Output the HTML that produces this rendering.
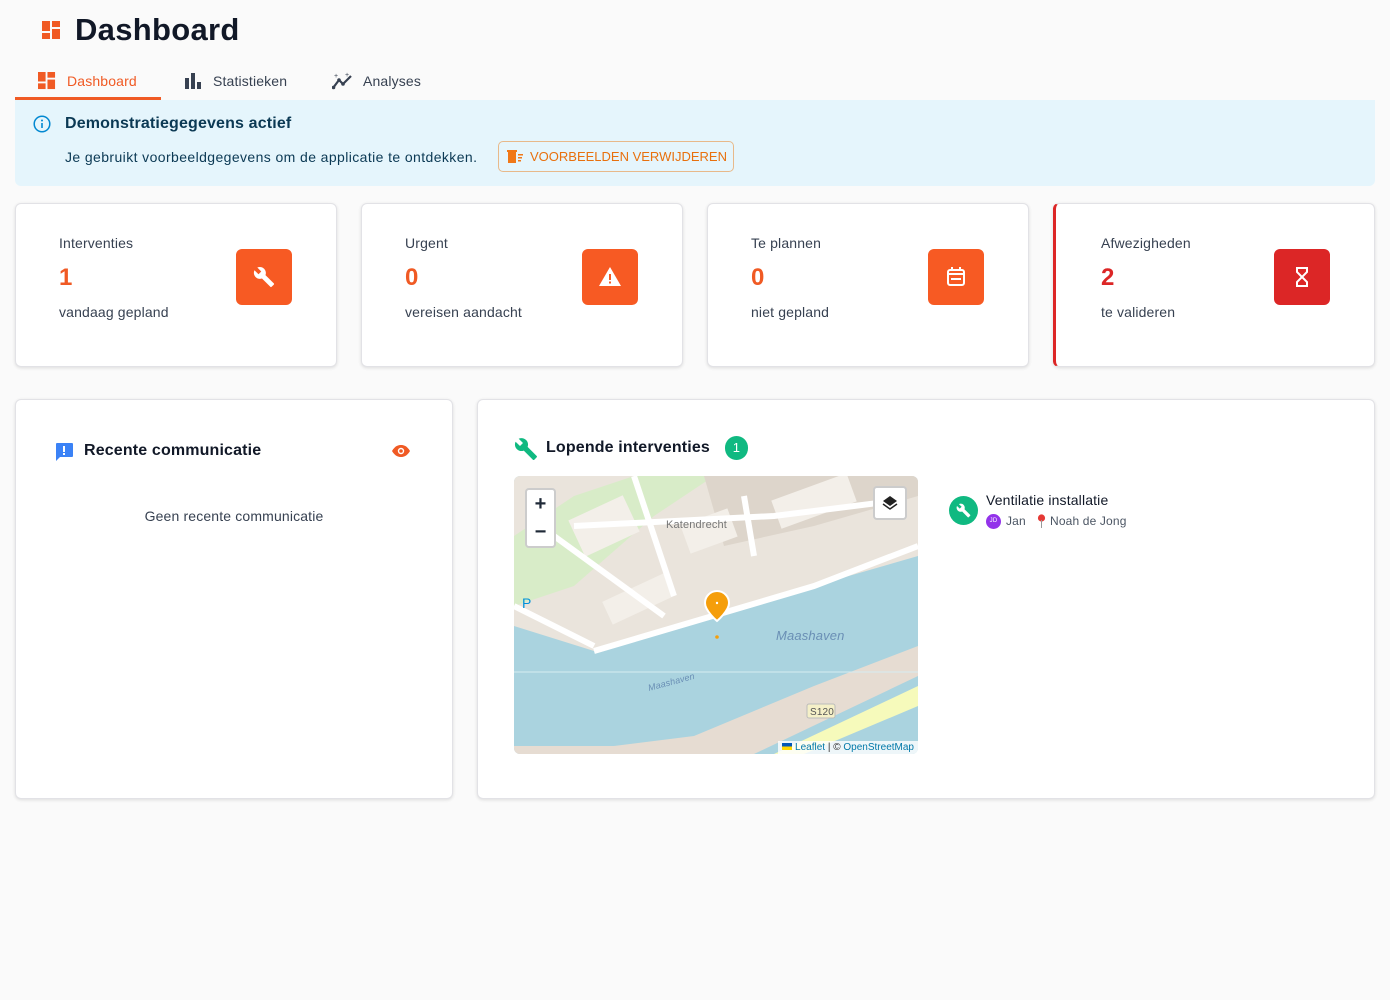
<!DOCTYPE html>
<html><head><meta charset="utf-8"><style>
*{box-sizing:border-box;margin:0;padding:0}
body{width:1390px;height:1000px;background:#fafafa;font-family:"Liberation Sans",sans-serif;color:#1f2937;position:relative;overflow:hidden;letter-spacing:.15px}
.abs{position:absolute}
.card{position:absolute;background:#fff;border:1px solid #e2e2e6;border-radius:6px;box-shadow:0 1px 3px rgba(0,0,0,.12)}
.lbl{position:absolute;left:43px;top:31px;font-size:14px;color:#374151}
.num{position:absolute;left:43px;top:60px;font-size:24px;font-weight:bold;color:#f05a24}
.sub{position:absolute;left:43px;top:100px;font-size:14px;color:#374151}
.ib{position:absolute;left:220px;top:45px;width:56px;height:56px;border-radius:6px;background:#f75a23;display:flex;align-items:center;justify-content:center}
</style></head><body>
<svg class="abs" style="left:42px;top:21px" width="19" height="19" viewBox="0 0 19 19"><g fill="#f05a24"><rect x="0" y="0" width="8" height="10"/><rect x="10" y="0" width="8" height="6"/><rect x="10" y="8" width="8" height="10"/><rect x="0" y="12" width="8" height="6"/></g></svg>
<div class="abs" style="left:75px;top:12px;font-size:31px;font-weight:bold;color:#111827;letter-spacing:.3px">Dashboard</div>

<svg class="abs" style="left:38px;top:72px" width="18" height="18" viewBox="0 0 19 19"><g fill="#f05a24"><rect x="0" y="0" width="8" height="10"/><rect x="10" y="0" width="8" height="6"/><rect x="10" y="8" width="8" height="10"/><rect x="0" y="12" width="8" height="6"/></g></svg>
<div class="abs" style="left:67px;top:73px;font-size:14px;color:#f05a24">Dashboard</div>
<div class="abs" style="left:15px;top:97px;width:146px;height:3px;background:#f05a24"></div>
<svg class="abs" style="left:185px;top:73px" width="16" height="16"><g fill="#374151"><rect x="0" y="5" width="4" height="11"/><rect x="6" y="0" width="4" height="16"/><rect x="12" y="9" width="4" height="7"/></g></svg>
<div class="abs" style="left:213px;top:73px;font-size:14px;color:#374151">Statistieken</div>
<svg class="abs" style="left:332px;top:72px" width="22" height="18" viewBox="0 0 22 18"><polyline points="1,16 7,8 11,12 19,4" fill="none" stroke="#374151" stroke-width="2.2"/><circle cx="1.5" cy="15.5" r="1.8" fill="#374151"/><circle cx="7" cy="8" r="1.8" fill="#374151"/><circle cx="11" cy="12" r="1.8" fill="#374151"/><text x="2" y="6" font-size="7" fill="#374151">+</text><text x="13" y="5" font-size="7" fill="#374151">+</text></svg>
<div class="abs" style="left:363px;top:73px;font-size:14px;color:#374151">Analyses</div>

<div class="abs" style="left:15px;top:100px;width:1360px;height:86px;background:#e5f5fc;border-radius:0 0 6px 6px"></div>
<svg class="abs" style="left:33px;top:115px" width="18" height="18"><circle cx="9" cy="9" r="7.8" fill="none" stroke="#0288d1" stroke-width="1.5"/><rect x="8.2" y="8" width="1.6" height="5" fill="#0288d1"/><circle cx="9" cy="5.5" r="1" fill="#0288d1"/></svg>
<div class="abs" style="left:65px;top:115px;font-size:16px;font-weight:bold;color:#0b3954">Demonstratiegegevens actief</div>
<div class="abs" style="left:65px;top:149px;font-size:14px;color:#0b3954;letter-spacing:.4px">Je gebruikt voorbeeldgegevens om de applicatie te ontdekken.</div>
<div class="abs" style="left:498px;top:141px;width:236px;height:31px;border:1px solid #e8b98a;border-radius:5px"></div>
<svg class="abs" style="left:507px;top:150px" width="16" height="13"><rect x="1" y="2" width="8" height="11" fill="#f07818"/><rect x="0" y="0" width="10" height="2" fill="#f07818"/><rect x="11" y="4" width="5" height="1.5" fill="#f07818"/><rect x="11" y="7" width="4" height="1.5" fill="#f07818"/><rect x="11" y="10" width="3" height="1.5" fill="#f07818"/></svg>
<div class="abs" style="left:530px;top:149px;width:196px;text-align:center;font-size:13px;color:#e8700d;letter-spacing:0;white-space:nowrap">VOORBEELDEN VERWIJDEREN</div>

<div class="card" style="left:15px;top:203px;width:322px;height:164px"><div class="lbl">Interventies</div><div class="num">1</div><div class="sub">vandaag gepland</div><div class="ib"><svg width="22" height="22" viewBox="0 0 24 24"><path fill="#fff" d="M22.7 19l-9.1-9.1c.9-2.3.4-5-1.5-6.9-2-2-5-2.4-7.4-1.3L9 6 6 9 1.6 4.7C.4 7.1.9 10.1 2.9 12.1c1.9 1.9 4.6 2.4 6.9 1.5l9.1 9.1c.4.4 1 .4 1.4 0l2.3-2.3c.5-.4.5-1.100.1-1.4z"/></svg></div></div>
<div class="card" style="left:361px;top:203px;width:322px;height:164px"><div class="lbl">Urgent</div><div class="num">0</div><div class="sub">vereisen aandacht</div><div class="ib"><svg width="24" height="22" viewBox="0 0 24 22"><path d="M12 1L23 20H1z" fill="#fff"/><rect x="11" y="8" width="2" height="6" fill="#f75a23"/><rect x="11" y="15.5" width="2" height="2" fill="#f75a23"/></svg></div></div>
<div class="card" style="left:707px;top:203px;width:322px;height:164px"><div class="lbl">Te plannen</div><div class="num">0</div><div class="sub">niet gepland</div><div class="ib"><svg width="20" height="20" viewBox="0 0 20 20"><rect x="2" y="3" width="16" height="15" rx="2" fill="none" stroke="#fff" stroke-width="2"/><rect x="2" y="6" width="16" height="2" fill="#fff"/><rect x="5" y="0" width="2" height="4" fill="#fff"/><rect x="13" y="0" width="2" height="4" fill="#fff"/><rect x="5" y="11" width="10" height="2" fill="#fff"/></svg></div></div>
<div class="card" style="left:1053px;top:203px;width:322px;height:164px;border-left:3px solid #dc2626"><div class="lbl" style="left:45px">Afwezigheden</div><div class="num" style="color:#dc2626;left:45px">2</div><div class="sub" style="left:45px">te valideren</div><div class="ib" style="background:#dc2626;left:218px"><svg width="14" height="20" viewBox="0 0 14 20"><path d="M1 1h12M1 19h12M2 1v4l5 5-5 5v4M12 1v4l-5 5 5 5v4" fill="none" stroke="#fff" stroke-width="2"/></svg></div></div>

<div class="card" style="left:15px;top:399px;width:438px;height:400px">
<svg class="abs" style="left:38px;top:42px" width="20" height="20" viewBox="0 0 20 20"><path d="M2 1h16a1 1 0 0 1 1 1v12a1 1 0 0 1-1 1H6l-4 4V2a1 1 0 0 1 1-1z" fill="#3b82f6"/><rect x="9" y="4" width="2" height="6" fill="#fff"/><rect x="9" y="11" width="2" height="2" fill="#fff"/></svg>
<div class="abs" style="left:68px;top:42px;font-size:16px;font-weight:bold;color:#111827">Recente communicatie</div>
<svg class="abs" style="left:375px;top:44px" width="20" height="14" viewBox="0 0 20 14"><path d="M1 7C4 2 7 1 10 1s6 1 9 6c-3 5-6 6-9 6S4 12 1 7z" fill="#f05a24"/><circle cx="10" cy="7" r="3.2" fill="#fff"/><circle cx="10" cy="7" r="1.8" fill="#f05a24"/></svg>
<div class="abs" style="left:0;width:436px;top:108px;text-align:center;font-size:14px;color:#374151">Geen recente communicatie</div>
</div>

<div class="card" style="left:477px;top:399px;width:898px;height:400px">
<svg class="abs" style="left:36px;top:37px" width="24" height="24" viewBox="0 0 24 24"><path fill="#10b981" d="M22.7 19l-9.1-9.1c.9-2.3.4-5-1.5-6.9-2-2-5-2.4-7.4-1.3L9 6 6 9 1.6 4.7C.4 7.1.9 10.1 2.9 12.1c1.9 1.9 4.6 2.4 6.9 1.5l9.1 9.1c.4.4 1 .4 1.4 0l2.3-2.3c.5-.4.5-1.1.1-1.4z"/></svg>
<div class="abs" style="left:68px;top:39px;font-size:16px;font-weight:bold;color:#111827">Lopende interventies</div>
<div class="abs" style="left:247px;top:36px;width:23px;height:24px;border-radius:12px;background:#10b981;color:#fff;font-size:13px;text-align:center;line-height:24px">1</div>

<div class="abs" style="left:36px;top:76px;width:404px;height:278px;border-radius:6px;overflow:hidden;background:#aad3df">
<svg width="404" height="278" viewBox="0 0 404 278">
<path d="M0 0H404V80L300 110 200 140 80 175 0 150z" fill="#eae4dc"/>
<path d="M0 60L60 20 120 0H200L140 40 60 110 0 130z" fill="#d8ecc8"/>
<path d="M190 0L404 0V20L300 50 210 70z" fill="#ddd5cb"/>
<g fill="#f3efe9"><rect x="60" y="30" width="60" height="40" transform="rotate(-25 90 50)"/><rect x="170" y="40" width="50" height="30" transform="rotate(-20 195 55)"/><rect x="260" y="10" width="80" height="30" transform="rotate(-20 300 25)"/><rect x="90" y="110" width="70" height="25" transform="rotate(-25 125 122)"/></g>
<g stroke="#fff" stroke-width="6" fill="none"><path d="M80 175L300 110 404 70"/><path d="M60 50L260 40 380 25"/><path d="M120 0L160 120"/><path d="M230 20L240 80"/><path d="M40 60L150 140"/><path d="M0 130L80 170"/></g>
<path d="M0 278L240 278 404 200V170L300 210 180 260 100 270 0 270z" fill="#e6dcd2"/>
<path d="M260 278L404 210V230L290 278z" fill="#f6fabb"/>
<line x1="0" y1="196" x2="404" y2="196" stroke="#d7ecf2" stroke-width="1"/>
<text x="152" y="52" font-size="11" fill="#777">Katendrecht</text>
<text x="262" y="164" font-size="13" font-style="italic" fill="#6a8fb5">Maashaven</text>
<text x="135" y="215" font-size="9" font-style="italic" fill="#6a8fb5" transform="rotate(-15 135 215)">Maashaven</text>
<text x="8" y="132" font-size="14" fill="#0092da">P</text>
<rect x="293" y="228" width="28" height="14" rx="2" fill="#f5f0c8" stroke="#bbb"/><text x="296" y="239" font-size="10" fill="#555">S120</text>
<path d="M191 139a12 12 0 0 1 24 0c0 8-12 18-12 18s-12-10-12-18z" fill="#f59e0b" stroke="#fff" stroke-width="2" transform="translate(0,-12)"/><circle cx="203" cy="127" r="1.2" fill="#fff"/><circle cx="203" cy="161" r="1.8" fill="#f59e0b"/>
</svg>
<div class="abs" style="left:11px;top:12px;width:31px;height:60px;background:#fff;border:2px solid rgba(0,0,0,.2);border-radius:4px;font-size:20px;font-weight:bold;text-align:center;line-height:28px">+<br>−</div>
<div class="abs" style="left:359px;top:10px;width:34px;height:34px;background:#fff;border:2px solid rgba(0,0,0,.2);border-radius:4px;text-align:center"><svg width="16" height="16" style="margin-top:7px" viewBox="0 0 16 16"><path d="M8 1l7 5-7 5-7-5z" fill="#222"/><path d="M1 9l7 5 7-5" fill="none" stroke="#222" stroke-width="1.5"/></svg></div>
<div class="abs" style="right:0;bottom:0;background:rgba(255,255,255,.8);font-size:10px;padding:1px 4px;color:#333;letter-spacing:0"><span style="display:inline-block;width:10px;height:7px;background:linear-gradient(#0057b7 50%,#ffd700 50%)"></span> <span style="color:#0078a8">Leaflet</span> | © <span style="color:#0078a8">OpenStreetMap</span></div>
</div>

<div class="abs" style="left:471px;top:96px;width:29px;height:29px;border-radius:50%;background:#10b981;display:flex;align-items:center;justify-content:center"><svg width="15" height="15" viewBox="0 0 24 24"><path fill="#fff" d="M22.7 19l-9.1-9.1c.9-2.3.4-5-1.5-6.9-2-2-5-2.4-7.4-1.3L9 6 6 9 1.6 4.7C.4 7.1.9 10.1 2.9 12.1c1.9 1.9 4.6 2.4 6.9 1.5l9.1 9.1c.4.4 1 .4 1.4 0l2.3-2.3c.5-.4.5-1.1.1-1.4z"/></svg></div>
<div class="abs" style="left:508px;top:92px;font-size:14px;color:#111827">Ventilatie installatie</div>
<div class="abs" style="left:508px;top:114px;width:15px;height:15px;border-radius:50%;background:#9333ea;color:#fff;font-size:6px;text-align:center;line-height:15px">JD</div>
<div class="abs" style="left:528px;top:114px;font-size:12px;color:#4b5563">Jan</div>
<svg class="abs" style="left:559px;top:114px" width="9" height="14" viewBox="0 0 9 14"><circle cx="4.5" cy="4" r="3.6" fill="#e53935"/><rect x="4" y="6" width="1" height="8" fill="#999"/></svg>
<div class="abs" style="left:572px;top:114px;font-size:12px;color:#4b5563">Noah de Jong</div>
</div>
</body></html>
